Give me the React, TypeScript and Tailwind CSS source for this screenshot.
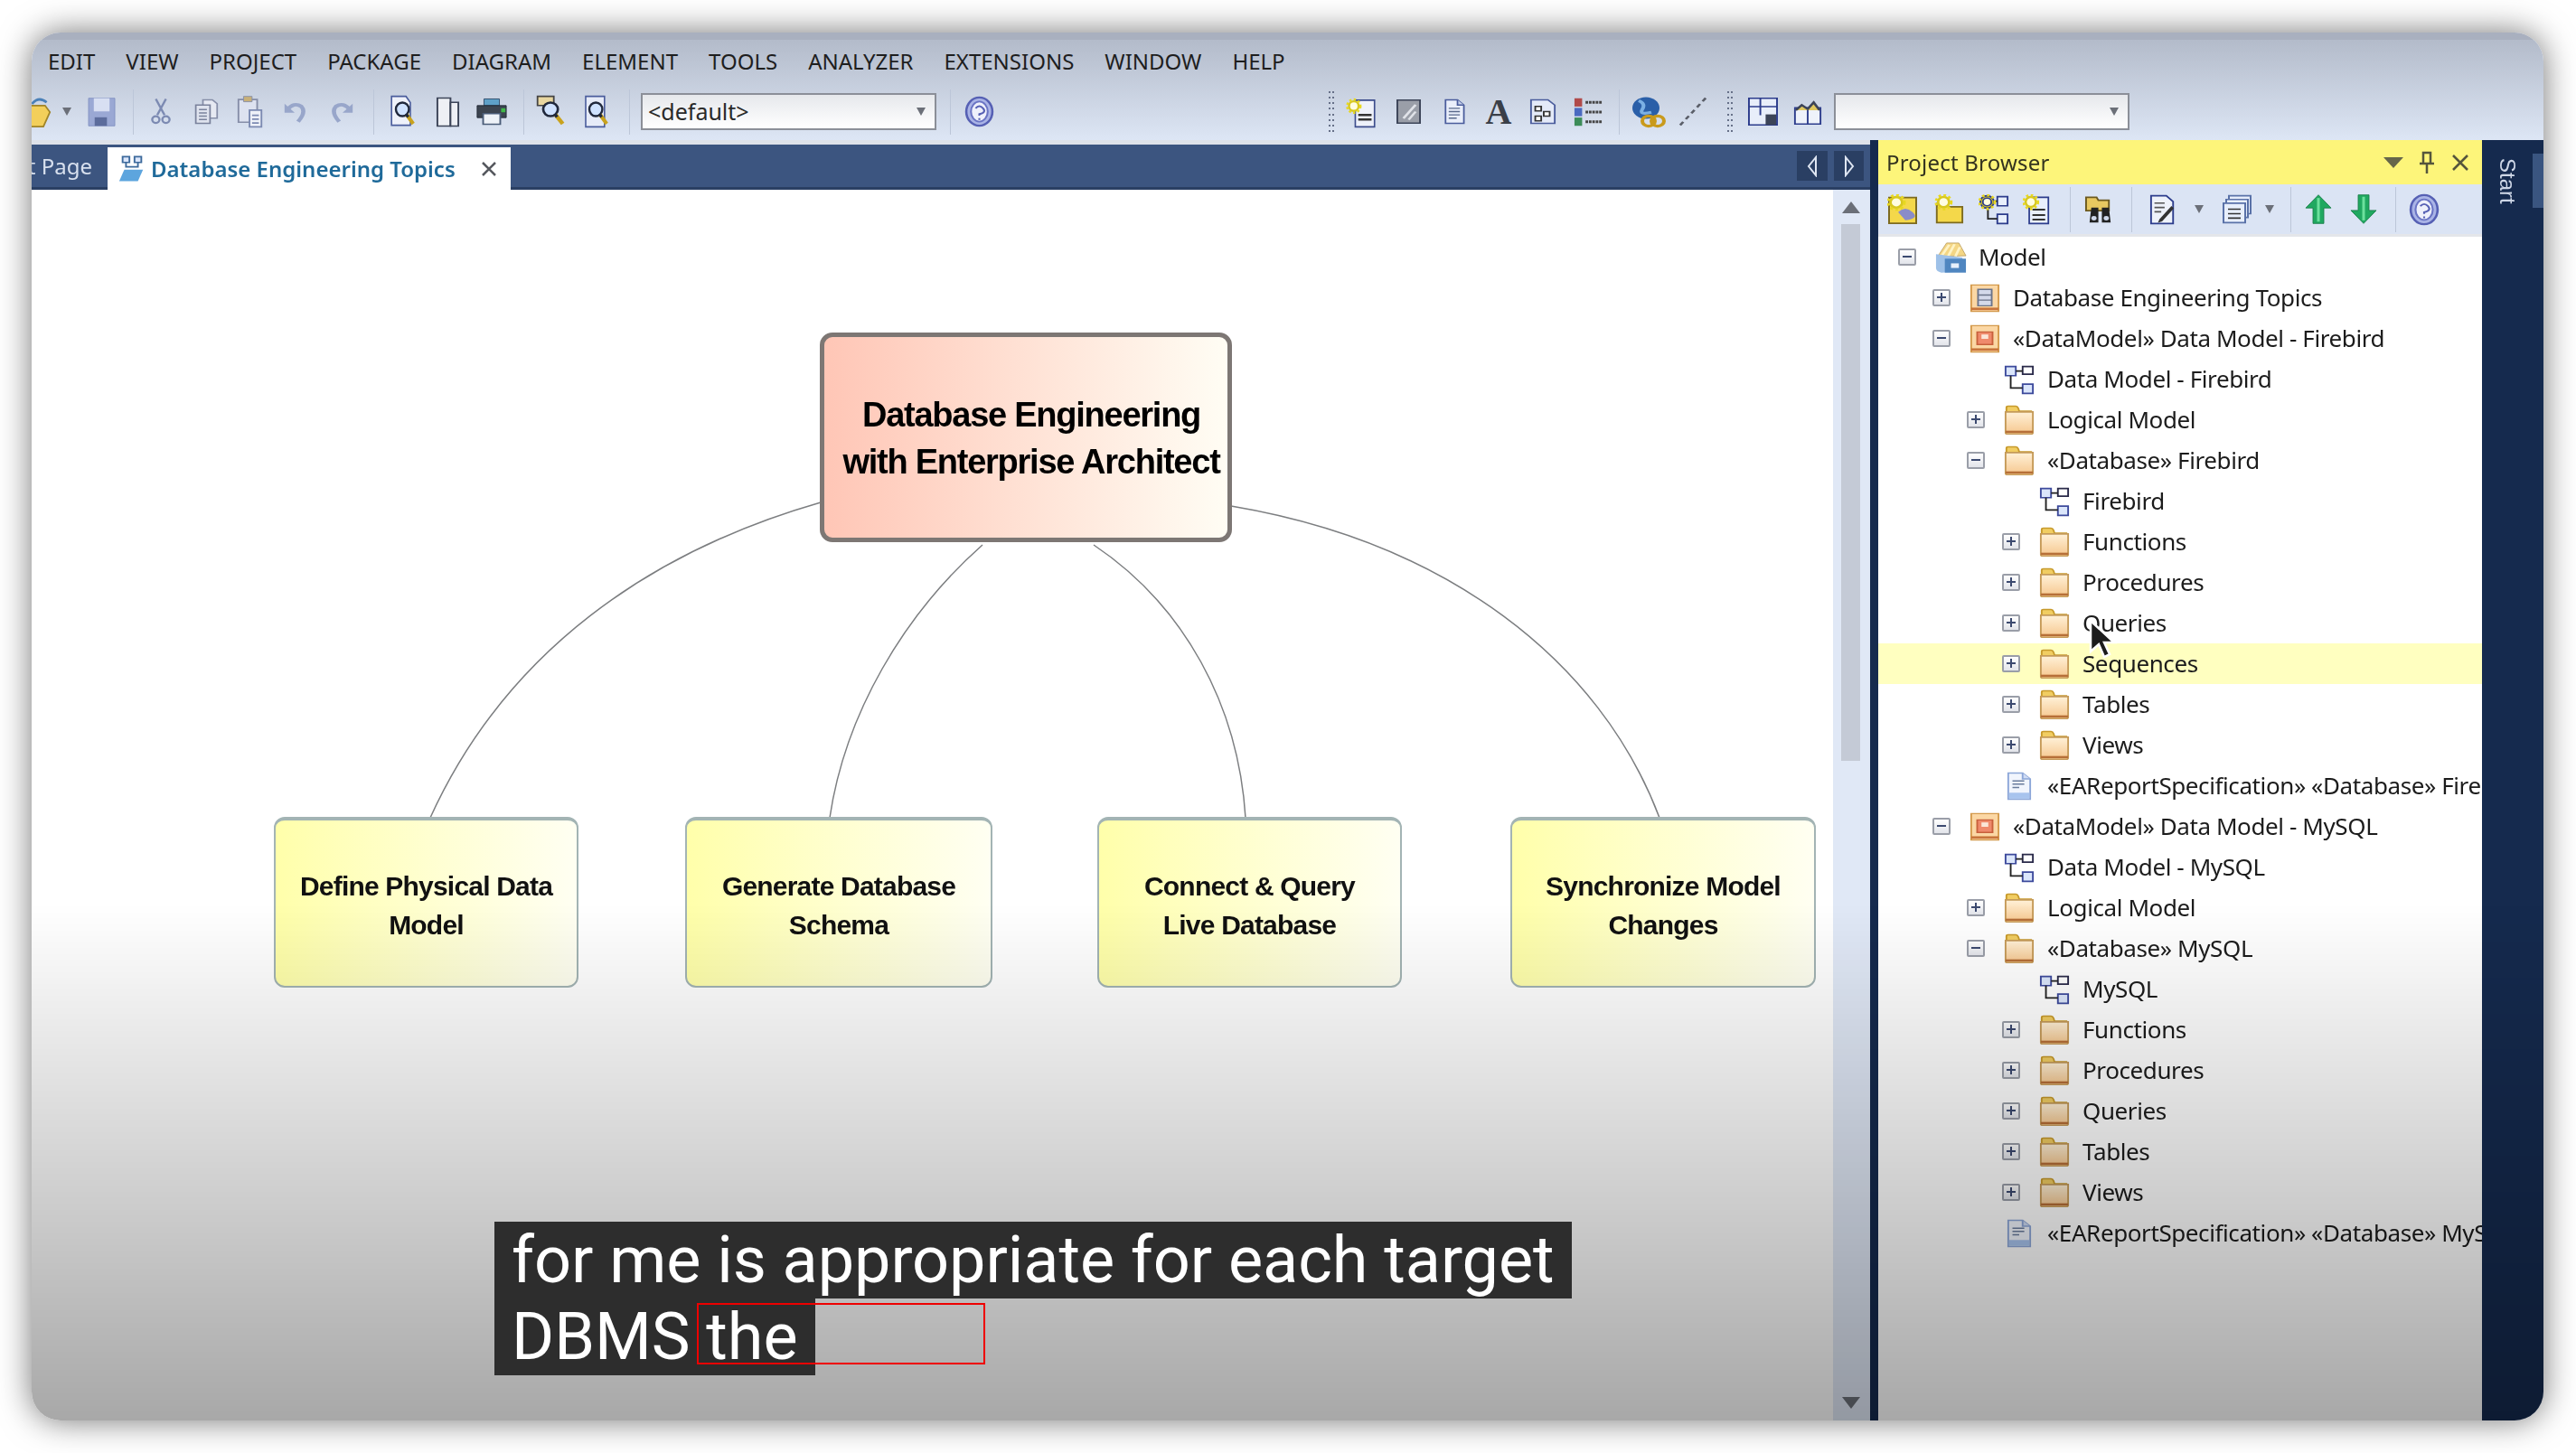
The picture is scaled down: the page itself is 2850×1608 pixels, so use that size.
import React from 'react';

const uiFont = "font-['Noto_Sans','Open_Sans',sans-serif]";

// toolbar glyphs
const Page = ({ lines = true }: { lines?: boolean }) => (
    <svg width="30" height="29" viewBox="0 0 34 40" preserveAspectRatio="none">
        <path d="M6 2h15l8 8v28H6z" fill="#e9eefa" stroke="#4a5c9c" strokeWidth="2" />
        <path d="M21 2v8h8" fill="#c4cfea" stroke="#4a5c9c" strokeWidth="2" />
        {lines && <path d="M10 15h14M10 20h14M10 25h14M10 30h10" stroke="#5a6a8c" strokeWidth="2" />}
    </svg>
);

const Magnify = ({ back, w = 32 }: { back?: React.ReactNode; w?: number }) => (
    <svg width={w} height="37" viewBox="0 0 40 44" preserveAspectRatio="none">
        {back}
        <circle cx="19" cy="19" r="9" fill="#cfe2ff" stroke="#20283c" strokeWidth="3" />
        <path d="M25 26l9 12" stroke="#c9a21c" strokeWidth="5" />
        <path d="M24 25l3 4" stroke="#20283c" strokeWidth="4" />
    </svg>
);

const Help = ({ size = 33 }: { size?: number }) => (
    <svg width={size} height={size + 2} viewBox="0 0 32 38" preserveAspectRatio="none">
        <ellipse cx="16" cy="19" rx="14" ry="17" fill="#aab4e6" stroke="#5660b4" strokeWidth="2.5" />
        <ellipse cx="16" cy="19" rx="9" ry="12" fill="#eef0fb" stroke="#6a74c4" strokeWidth="2" />
        <path d="M12 15q4-5 8 0t-4 7v2M16 27v2" fill="none" stroke="#5660b4" strokeWidth="2" />
    </svg>
);

const Cut = () => (
    <svg width="24" height="31" viewBox="0 0 30 42" preserveAspectRatio="none" fill="none" stroke="#7c8ab2" strokeWidth="3">
        <path d="M8 2l12 24M22 2L10 26" />
        <circle cx="8" cy="33" r="5" />
        <circle cx="22" cy="33" r="5" />
    </svg>
);

const Copy = () => (
    <svg width="28" height="29" viewBox="0 0 32 40" preserveAspectRatio="none">
        <path d="M12 2h12l6 6v22H12z" fill="#e6e9f2" stroke="#868ea8" strokeWidth="2" />
        <path d="M3 10h18v28H3z" fill="#dfe3ee" stroke="#7a829c" strokeWidth="2" />
        <path d="M7 17h10M7 22h10M7 27h10M7 32h10" stroke="#7a829c" strokeWidth="2" />
    </svg>
);

const Paste = () => (
    <svg width="32" height="37" viewBox="0 0 34 44" preserveAspectRatio="none">
        <path d="M3 6h22v30H3z" fill="#dde2f0" stroke="#868ea8" strokeWidth="2" />
        <path d="M9 2h10v7H9z" fill="#c8b078" stroke="#868ea8" />
        <path d="M16 20h14v22H16z" fill="#eef1f8" stroke="#7c8ab2" strokeWidth="2" />
        <path d="M19 27h8M19 32h8M19 37h8" stroke="#7c8ab2" strokeWidth="2" />
    </svg>
);

const Undo = ({ flip }: { flip?: boolean }) => (
    <svg width="28" height="26" viewBox="0 0 30 34" preserveAspectRatio="none" className={flip ? '-scale-x-100' : ''} fill="none">
        <path d="M6 14q8-12 17-5 6 8-4 22" stroke="#98a6ca" strokeWidth="5" />
        <path d="M3 5v13h12z" fill="#98a6ca" />
    </svg>
);

const Save = () => (
    <svg width="31" height="32" viewBox="0 0 32 44" preserveAspectRatio="none">
        <path d="M1 1h30v42H1z" fill="#9aa8d4" stroke="#8090c0" />
        <path d="M7 1h18v20H7z" fill="#d8dff2" />
        <path d="M8 30h14v13H8z" fill="#5c6c9c" />
    </svg>
);

const Printer = () => (
    <svg width="36" height="31" viewBox="0 0 38 42" preserveAspectRatio="none">
        <path d="M10 2h18v10H10z" fill="#5ea0c8" stroke="#244060" />
        <path d="M2 12h34v18H2z" fill="#3c4450" stroke="#1c2430" />
        <path d="M30 16h5v6h-5z" fill="#40b848" />
        <path d="M9 24h20v16H9z" fill="#eef2f8" stroke="#4a5c78" strokeWidth="2" />
    </svg>
);

const Dual = () => (
    <svg width="27" height="34" viewBox="0 0 28 44" preserveAspectRatio="none" fill="#eef0f5" stroke="#3c4458" strokeWidth="2">
        <path d="M2 2h15v40H2z" />
        <path d="M17 8h9v34h-9z" />
    </svg>
);

const Gripper = ({ className = '' }: { className?: string }) => (
    <div className={`w-[8px] h-[48px] shrink-0 flex flex-col justify-between items-center py-px ${className}`}>
        {[0, 1, 2, 3, 4, 5, 6, 7].map(i => (
            <div key={i} className="w-[6px] h-[2px] border-x-2 border-[#667088]" />
        ))}
    </div>
);

const Sep = ({ className = '' }: { className?: string }) => (
    <div className={`w-px h-[50px] shrink-0 bg-[#bcc6d8] ${className}`} />
);

const Slot = ({ children, className = 'w-[50px]' }: { children?: React.ReactNode; className?: string }) => (
    <div className={`h-[50px] shrink-0 flex items-center justify-center ${className}`}>{children}</div>
);

const Arrow = ({ className = '' }: { className?: string }) => (
    <div className={`w-0 h-0 border-x-[5px] border-t-[9px] border-x-transparent border-t-[#6b6f78] ${className}`} />
);

const DropBox = ({ text, className }: { text?: string; className: string }) => (
    <div className={`h-[41px] shrink-0 flex items-center justify-between pl-[6px] pr-[10px] bg-linear-to-b from-[#e6e8ec] to-white border-2 border-[#8b8f98] ${className}`}>
        <span className={`text-[25px] text-[#2a2a2a] ${uiFont}`}>{text}</span>
        <Arrow />
    </div>
);

const Star = ({ x, y }: { x: number; y: number }) => (
    <g transform={`translate(${x} ${y})`}>
        <circle r="8" fill="#d8c820" />
        <circle r="9" fill="none" stroke="#e8d820" strokeWidth="3" strokeDasharray="3 3" />
        <circle r="5" fill="#fffde0" />
    </g>
);

const DiagramIcon = () => (
    <svg width="34" height="34" viewBox="0 0 36 40" preserveAspectRatio="none" fill="#dbe6fb" stroke="#3d4a9c" strokeWidth="2">
        <path d="M2 3h12v12H2z" />
        <path d="M22 3h12v10H22z" fill="#fff" stroke="#2a2a4a" />
        <path d="M22 26h12v12H22z" />
        <path d="M14 9h8M8 15v16h14" fill="none" stroke="#222" />
    </svg>
);

const Folder = () => (
    <svg width="34" height="33" viewBox="0 0 36 42" preserveAspectRatio="none">
        <defs>
            <linearGradient id="folder" x1="0" y1="0" x2="0" y2="1">
                <stop offset="0" stopColor="#fff1d8" />
                <stop offset="1" stopColor="#f6c78e" />
            </linearGradient>
        </defs>
        <path d="M3 9V4q0-2 2-2h9q2 0 3 3l1 4h14v30H3z" fill="#f1cd62" stroke="#c79a2c" strokeWidth="2" />
        <path d="M2 10h32v29q0 2-2 2H4q-2 0-2-2z" fill="url(#folder)" stroke="#c59a58" strokeWidth="2" />
        <path d="M2 38h32" stroke="#b66f38" strokeWidth="3" />
    </svg>
);

const PackageIcon = ({ inner }: { inner: 'list' | 'model' }) => (
    <svg width="34" height="32" viewBox="0 0 36 46" preserveAspectRatio="none">
        <path d="M2 2h32v42H2z" fill="#fbd7a4" stroke="#d49a4c" strokeWidth="2" />
        <path d="M2 40h32" stroke="#c8753c" strokeWidth="4" />
        {inner === 'list' ? (
            <path d="M10 9h16v26H10zM10 18h16M10 26h16" fill="#d4d9ea" stroke="#6a7388" strokeWidth="2" />
        ) : (
            <g>
                <path d="M9 12h18v20H9z" fill="#ef8a6c" stroke="#c8603c" strokeWidth="2" />
                <path d="M14 16h8v7h-8z" fill="#fbe6d8" />
            </g>
        )}
    </svg>
);

const ReportIcon = () => (
    <svg width="28" height="32" viewBox="0 0 30 44" preserveAspectRatio="none">
        <path d="M2 2h17l9 9v31H2z" fill="#f1f5fd" stroke="#8ca6d8" strokeWidth="2" />
        <path d="M19 2v9h9" fill="#cfdcf4" stroke="#8ca6d8" strokeWidth="2" />
        <path d="M7 14h14M7 19h14M7 24h8" stroke="#6a7c9c" strokeWidth="2" />
        <path d="M3 32h24v9H3z" fill="#a8c4ee" />
    </svg>
);

const ModelIcon = () => (
    <svg width="37" height="36" viewBox="0 0 38 56" preserveAspectRatio="none">
        <path d="M4 26L14 3h14l8 22z" fill="#f4d684" stroke="#b89a5c" />
        <path d="M9 24l8-18M16 25l7-20M24 26l5-16" stroke="#fff3c4" strokeWidth="3" />
        <path d="M2 22l30 6v24L8 54q-6-2-6-8z" fill="#9ec1e8" />
        <path d="M12 30h24v24H12z" fill="#4f86c0" />
        <path d="M19 38h9v8h-9z" fill="#e7f0fb" />
    </svg>
);

const Expander = ({ open }: { open?: boolean }) => (
    <div className="w-[20px] h-[19px] shrink-0 rounded-[2px] border-2 border-[#9a9ea8] bg-linear-to-b from-white to-[#e2e4ea] relative">
        <div className="absolute left-[3px] top-[6px] w-[10px] h-[2px] bg-[#3c4a70]" />
        {!open && <div className="absolute left-[7px] top-[2px] w-[2px] h-[10px] bg-[#3c4a70]" />}
    </div>
);

type Row = {
    text: string;
    level: 0 | 1 | 2 | 3;
    icon: 'model' | 'list' | 'pkg' | 'diagram' | 'folder' | 'report';
    exp?: 'open' | 'closed';
    active?: boolean;
};

const rows: Row[] = [
    { text: 'Model', level: 0, icon: 'model', exp: 'open' },
    { text: 'Database Engineering Topics', level: 1, icon: 'list', exp: 'closed' },
    { text: '«DataModel» Data Model - Firebird', level: 1, icon: 'pkg', exp: 'open' },
    { text: 'Data Model - Firebird', level: 2, icon: 'diagram' },
    { text: 'Logical Model', level: 2, icon: 'folder', exp: 'closed' },
    { text: '«Database» Firebird', level: 2, icon: 'folder', exp: 'open' },
    { text: 'Firebird', level: 3, icon: 'diagram' },
    { text: 'Functions', level: 3, icon: 'folder', exp: 'closed' },
    { text: 'Procedures', level: 3, icon: 'folder', exp: 'closed' },
    { text: 'Queries', level: 3, icon: 'folder', exp: 'closed' },
    { text: 'Sequences', level: 3, icon: 'folder', exp: 'closed', active: true },
    { text: 'Tables', level: 3, icon: 'folder', exp: 'closed' },
    { text: 'Views', level: 3, icon: 'folder', exp: 'closed' },
    { text: '«EAReportSpecification» «Database» Firebird', level: 2, icon: 'report' },
    { text: '«DataModel» Data Model - MySQL', level: 1, icon: 'pkg', exp: 'open' },
    { text: 'Data Model - MySQL', level: 2, icon: 'diagram' },
    { text: 'Logical Model', level: 2, icon: 'folder', exp: 'closed' },
    { text: '«Database» MySQL', level: 2, icon: 'folder', exp: 'open' },
    { text: 'MySQL', level: 3, icon: 'diagram' },
    { text: 'Functions', level: 3, icon: 'folder', exp: 'closed' },
    { text: 'Procedures', level: 3, icon: 'folder', exp: 'closed' },
    { text: 'Queries', level: 3, icon: 'folder', exp: 'closed' },
    { text: 'Tables', level: 3, icon: 'folder', exp: 'closed' },
    { text: 'Views', level: 3, icon: 'folder', exp: 'closed' },
    { text: '«EAReportSpecification» «Database» MySQL', level: 2, icon: 'report' },
];

const indent = ['pl-[22px]', 'pl-[60px]', 'pl-[98px]', 'pl-[137px]'];

const TreeRow = ({ row }: { row: Row }) => (
    <div className={`h-[45px] flex items-center whitespace-nowrap ${indent[row.level]} ${row.active ? 'bg-[#ffffc0]' : ''}`}>
        <div className="w-[20px] shrink-0 flex items-center">{row.exp && <Expander open={row.exp === 'open'} />}</div>
        <div className="ml-[14px] w-[48px] h-[45px] shrink-0 flex items-center justify-center">
            {row.icon === 'model' && <ModelIcon />}
            {row.icon === 'list' && <PackageIcon inner="list" />}
            {row.icon === 'pkg' && <PackageIcon inner="model" />}
            {row.icon === 'diagram' && <DiagramIcon />}
            {row.icon === 'folder' && <Folder />}
            {row.icon === 'report' && <ReportIcon />}
        </div>
        <span className="ml-[7px] text-[26px] tracking-[-0.4px] text-[#1c1c1c]">{row.text}</span>
    </div>
);

const MENU = ['EDIT', 'VIEW', 'PROJECT', 'PACKAGE', 'DIAGRAM', 'ELEMENT', 'TOOLS', 'ANALYZER', 'EXTENSIONS', 'WINDOW', 'HELP'];

const childNodes = [
    { lines: ['Define Physical Data', 'Model'], className: 'left-[268px] w-[337px]' },
    { lines: ['Generate Database', 'Schema'], className: 'left-[723px] w-[340px]' },
    { lines: ['Connect & Query', 'Live Database'], className: 'left-[1179px] w-[337px]' },
    { lines: ['Synchronize Model', 'Changes'], className: 'left-[1636px] w-[338px]' },
];

const Diagram = () => (
    <div className="relative flex-1 bg-white">
        <svg className="absolute inset-0 w-full h-full" viewBox="35 210 1993 1362" fill="none" stroke="#7c7e80" strokeWidth="1.5">
            <path d="M908 556C720 610 560 720 476 905" />
            <path d="M1087 603C1000 680 935 790 918 905" />
            <path d="M1210 603C1310 670 1370 780 1378 905" />
            <path d="M1362 560C1600 600 1770 730 1836 905" />
        </svg>
        <div className="absolute left-[872px] top-[158px] w-[456px] h-[232px] rounded-[14px] border-[5px] border-[#7d7774] bg-linear-to-r from-[#ffc6b6] to-[#fffdf4] flex flex-col items-center justify-center pl-[12px] pt-[2px] font-['Liberation_Sans',sans-serif] font-bold text-[38px] leading-[52px] tracking-[-1.25px] text-black whitespace-nowrap">
            <div>Database Engineering</div>
            <div>with Enterprise Architect</div>
        </div>
        {childNodes.map(n => (
            <div key={n.lines[0]} className={`absolute top-[694px] h-[189px] rounded-[12px] border-2 border-[#a3b4b4] border-t-[4px] bg-linear-to-r from-[#ffffaa] to-[#fffff2] flex flex-col items-center justify-center pt-[4px] font-['Liberation_Sans',sans-serif] font-bold text-[30px] leading-[43px] tracking-[-0.8px] text-[#111] whitespace-nowrap ${n.className}`}>
                {n.lines.map(l => <div key={l}>{l}</div>)}
            </div>
        ))}
    </div>
);

export default function App() {
    return (
        <div className="w-[2850px] h-[1608px] bg-white pt-[36px] pl-[35px] overflow-hidden">
            <div className="relative w-[2779px] h-[1536px] rounded-[32px] overflow-hidden shadow-[0_0_36px_rgba(0,0,0,0.55)]">
                <div className={`flex flex-col h-full blur-[0.6px] ${uiFont}`}>
                    {/* Menu and toolbar */}
                    <div className="h-[119px] shrink-0 border-t-[8px] border-[#a9b0bf] bg-linear-to-b from-[#b3bbca] to-[#dde6f5]">
                        <div className="h-[48px] flex items-center gap-[34px] pl-[18px] text-[24px] text-[#1e1e1e]">
                            {MENU.map(m => <span key={m}>{m}</span>)}
                        </div>
                        <div className="h-[63px] flex items-center">
                            <Slot className="w-[22px] overflow-hidden justify-end">
                                <svg width="36" height="36" viewBox="0 0 40 40" className="shrink-0">
                                    <path d="M2 12h30l6 8-8 18H2z" fill="#f3cf5a" stroke="#a08428" strokeWidth="2" />
                                    <path d="M16 10q8-10 18-2" stroke="#4a80b8" strokeWidth="3" fill="none" />
                                </svg>
                            </Slot>
                            <Slot className="w-[34px]"><Arrow /></Slot>
                            <Slot className="w-[42px]"><Save /></Slot>
                            <Sep className="ml-[14px] mr-[5px]" />
                            <Slot><Cut /></Slot>
                            <Slot><Copy /></Slot>
                            <Slot className="w-[48px]"><Paste /></Slot>
                            <Slot><Undo /></Slot>
                            <Slot className="w-[56px]"><Undo flip /></Slot>
                            <Sep className="ml-[6px] mr-[7px]" />
                            <Slot><Magnify back={<path d="M4 2h20l6 8v30H4z" fill="#eef1fa" stroke="#4a5c9c" strokeWidth="2" />} /></Slot>
                            <Slot className="w-[48px]"><Dual /></Slot>
                            <Slot><Printer /></Slot>
                            <Sep className="ml-[10px] mr-[5px]" />
                            <Slot><Magnify w={36} back={<path d="M3 2h20v12H3z" fill="#e8d6a0" stroke="#444" strokeWidth="2" />} /></Slot>
                            <Slot><Magnify back={<path d="M5 2h26v40H5z" fill="#e6ebf8" stroke="#4a5c9c" strokeWidth="2" />} /></Slot>
                            <Sep className="ml-[11px] mr-[12px]" />
                            <DropBox text="<default>" className="w-[327px]" />
                            <Sep className="ml-[15px] mr-[6px]" />
                            <Slot><Help /></Slot>
                            <Gripper className="ml-[361px] mr-[3px]" />
                            <Slot className="w-[52px]">
                                <svg width="36" height="36" viewBox="0 0 44 44" preserveAspectRatio="none">
                                    <path d="M14 6h26v36H14z" fill="#eef1fa" stroke="#3c4c8c" strokeWidth="2" />
                                    <path d="M18 26h18M18 32h18" stroke="#333" strokeWidth="3" />
                                    <Star x={12} y={14} />
                                </svg>
                            </Slot>
                            <Slot className="w-[52px]">
                                <svg width="27" height="27" viewBox="0 0 28 36" preserveAspectRatio="none">
                                    <rect x="1" y="1" width="26" height="34" fill="#9a9ea8" stroke="#3c4458" strokeWidth="2" />
                                    <path d="M8 28L22 8M14 30l8-12" stroke="#e0e2e8" strokeWidth="3" />
                                </svg>
                            </Slot>
                            <Slot><Page /></Slot>
                            <Slot className="w-[48px]"><span className="font-['Liberation_Serif',serif] font-bold text-[40px] leading-none text-[#3a3f48]">A</span></Slot>
                            <Slot>
                                <svg width="30" height="29" viewBox="0 0 32 40" preserveAspectRatio="none">
                                    <path d="M2 2h20l8 8v28H2z" fill="#e4eaf8" stroke="#4a5c9c" strokeWidth="2" />
                                    <path d="M7 12h7v7H7zM17 20h7v7h-7zM7 27h7v7H7z" fill="#fff" stroke="#333" strokeWidth="2" />
                                </svg>
                            </Slot>
                            <Slot>
                                <svg width="32" height="32" viewBox="0 0 34 42" preserveAspectRatio="none">
                                    <rect x="1" y="1" width="9" height="12" fill="#b04a4a" />
                                    <rect x="1" y="15" width="9" height="12" fill="#4a6ac0" />
                                    <rect x="1" y="29" width="9" height="12" fill="#3c8c58" />
                                    <path d="M14 7h20M14 21h20M14 35h20" stroke="#444" strokeWidth="4" strokeDasharray="3 1" />
                                </svg>
                            </Slot>
                            <Sep className="ml-[9px] mr-[7px]" />
                            <Slot>
                                <svg width="38" height="37" viewBox="0 0 38 46" preserveAspectRatio="none">
                                    <circle cx="16" cy="18" r="15" fill="#2a5fa8" />
                                    <path d="M8 8q8 4 4 12t10 4" stroke="#7bb0e4" strokeWidth="4" fill="none" />
                                    <circle cx="19" cy="36" r="7" fill="none" stroke="#c99a1c" strokeWidth="4" />
                                    <circle cx="29" cy="36" r="7" fill="none" stroke="#c99a1c" strokeWidth="4" />
                                </svg>
                            </Slot>
                            <Slot className="w-[48px]">
                                <svg width="32" height="33" viewBox="0 0 34 44" preserveAspectRatio="none">
                                    <path d="M2 42L32 2" stroke="#5a5e68" strokeWidth="3" strokeDasharray="6 5" />
                                </svg>
                            </Slot>
                            <Gripper className="ml-[13px] mr-[7px]" />
                            <Slot>
                                <svg width="33" height="31" viewBox="0 0 34 40" preserveAspectRatio="none">
                                    <path d="M1 1h32v38H1z" fill="#e8eefa" stroke="#2c3c8c" strokeWidth="2" />
                                    <path d="M1 13h32M14 1v24" stroke="#2c3c8c" strokeWidth="2" />
                                    <path d="M20 24h12v15H20z" fill="#3c4458" />
                                </svg>
                            </Slot>
                            <Slot>
                                <svg width="32" height="29" viewBox="0 0 34 40" preserveAspectRatio="none">
                                    <path d="M2 14h30v25H2z" fill="#eef2fa" stroke="#2c3c8c" strokeWidth="2" />
                                    <path d="M17 14v25" stroke="#2c3c8c" strokeWidth="2" />
                                    <path d="M3 18l7-8 7 6 7-10 7 12" fill="#e0c860" stroke="#3c4458" strokeWidth="3" />
                                </svg>
                            </Slot>
                            <DropBox className="w-[327px] ml-[4px]" />
                        </div>
                    </div>

                    <div className="flex-1 flex min-h-0">
                        {/* Diagram side */}
                        <div className="w-[2034px] shrink-0 flex flex-col">
                            <div className="h-[5px] bg-[#dee2e9]" />
                            <div className="h-[50px] shrink-0 flex items-end bg-[#3c5580] border-b-[3px] border-[#2a3f63]">
                                <div className="w-[84px] h-full flex items-center justify-end overflow-hidden pr-[17px] text-[24px] text-[#d8e0ee] whitespace-nowrap">t Page</div>
                                <div className="w-[446px] h-[47px] -mb-[3px] bg-white flex items-center pl-[11px]">
                                    <svg width="32" height="32" viewBox="0 0 34 40" preserveAspectRatio="none">
                                        <path d="M6 3h8v8H6zM20 3h8v8h-8z" fill="#dbe6fb" stroke="#3d6a9c" strokeWidth="2" />
                                        <path d="M10 11v6h14v-6" fill="none" stroke="#3d6a9c" strokeWidth="2" />
                                        <path d="M8 21h22l-6 16H2z" fill="#5da5de" />
                                    </svg>
                                    <span className="ml-[5px] text-[24px] font-semibold tracking-[0px] text-[#1f6a9a] whitespace-nowrap">Database Engineering Topics</span>
                                    <svg width="18" height="18" viewBox="0 0 18 18" className="ml-auto mr-[15px]" stroke="#55585e" strokeWidth="2.5">
                                        <path d="M2 2l14 14M16 2L2 16" />
                                    </svg>
                                </div>
                                <div className="ml-auto h-full flex items-center gap-[7px] pr-[7px]">
                                    <div className="w-[34px] h-[33px] bg-[#2a3f63] flex items-center justify-center">
                                        <svg width="12" height="24" viewBox="0 0 12 24" fill="none" stroke="#dfe6f2" strokeWidth="2"><path d="M10 2L2 12l8 10z" /></svg>
                                    </div>
                                    <div className="w-[33px] h-[33px] bg-[#2a3f63] flex items-center justify-center">
                                        <svg width="12" height="24" viewBox="0 0 12 24" fill="none" stroke="#dfe6f2" strokeWidth="2"><path d="M2 2l8 10L2 22z" /></svg>
                                    </div>
                                </div>
                            </div>
                            <div className="flex-1 flex min-h-0">
                                <Diagram />
                                <div className="w-[41px] shrink-0 bg-[#e0e8f6] flex flex-col items-center pt-[13px] pb-[13px] pr-[2px]">
                                    <div className="w-0 h-0 border-x-[10px] border-b-[13px] border-x-transparent border-b-[#6b6f78]" />
                                    <div className="w-[21px] h-[594px] mt-[12px] bg-[#c4cad6]" />
                                    <div className="w-0 h-0 border-x-[10px] border-t-[13px] border-x-transparent border-t-[#6b6f78] mt-auto" />
                                </div>
                            </div>
                        </div>

                        {/* Project browser */}
                        <div className="w-[9px] shrink-0 bg-[#152a4e]" />
                        <div className="w-[668px] shrink-0 flex flex-col">
                            <div className="h-[49px] shrink-0 bg-[#fdf57a] flex items-center pl-[9px] pr-[14px] text-[24px] tracking-[0.2px] text-[#33331f]">
                                <span>Project Browser</span>
                                <div className="ml-auto w-0 h-0 border-x-[11px] border-t-[12px] border-x-transparent border-t-[#66664a]" />
                                <svg width="18" height="26" viewBox="0 0 18 26" className="ml-[17px]" fill="none" stroke="#55553c" strokeWidth="2.5">
                                    <path d="M5 2h8v12H5zM1 14h16M9 14v11" />
                                </svg>
                                <svg width="20" height="20" viewBox="0 0 20 20" className="ml-[18px]" stroke="#55553c" strokeWidth="2.5">
                                    <path d="M2 2l16 16M18 2L2 18" />
                                </svg>
                            </div>
                            <div className="h-[58px] shrink-0 bg-[#dbe4f4] border-b-[3px] border-[#e4e6ea] flex items-center pl-[3px]">
                                <Slot>
                                    <svg width="36" height="34" viewBox="0 0 36 38" preserveAspectRatio="none">
                                        <path d="M2 4h30v32H2z" fill="#f4d84a" stroke="#7c6a20" strokeWidth="2" />
                                        <path d="M12 22q8-8 16 0t-8 10z" fill="#8a8cc8" />
                                        <Star x={10} y={10} />
                                    </svg>
                                </Slot>
                                <Slot>
                                    <svg width="34" height="33" viewBox="0 0 36 38" preserveAspectRatio="none">
                                        <path d="M4 12h12l2 4h16v20H4z" fill="#f4d84a" stroke="#7c6a20" strokeWidth="2" />
                                        <Star x={12} y={10} />
                                    </svg>
                                </Slot>
                                <Slot>
                                    <svg width="34" height="34" viewBox="0 0 36 40" preserveAspectRatio="none" fill="#e8effc" stroke="#2c3c8c" strokeWidth="2">
                                        <path d="M22 3h12v12H22zM22 26h12v12H22z" />
                                        <path d="M11 15v17h11M16 9h6" fill="none" stroke="#222" />
                                        <Star x={10} y={10} />
                                    </svg>
                                </Slot>
                                <Slot className="w-[44px]">
                                    <svg width="30" height="34" viewBox="0 0 34 40" preserveAspectRatio="none">
                                        <path d="M8 4h24v34H8z" fill="#e8effc" stroke="#2c3c8c" strokeWidth="2" />
                                        <path d="M12 20h16M12 27h16M12 33h16" stroke="#333" strokeWidth="2.5" />
                                        <Star x={10} y={10} />
                                    </svg>
                                </Slot>
                                <Sep className="ml-[15px] mr-[8px]" />
                                <Slot className="w-[48px]">
                                    <svg width="35" height="33" viewBox="0 0 36 40" preserveAspectRatio="none">
                                        <path d="M2 4h12l2 4h12v14H2z" fill="#e8c860" stroke="#6c5a20" strokeWidth="2" />
                                        <path d="M8 18h8v20H6zM20 18h8l2 20H20z" fill="#222" />
                                        <circle cx="11" cy="32" r="3" fill="#cfd8ea" />
                                        <circle cx="25" cy="32" r="3" fill="#cfd8ea" />
                                    </svg>
                                </Slot>
                                <Sep className="ml-[11px] mr-[12px]" />
                                <Slot className="w-[44px]">
                                    <svg width="30" height="34" viewBox="0 0 32 42" preserveAspectRatio="none">
                                        <path d="M2 2h18l8 8v30H2z" fill="#eef2fa" stroke="#2c3c8c" strokeWidth="2" />
                                        <path d="M6 12h12M6 18h12M6 24h8" stroke="#555" strokeWidth="2" />
                                        <path d="M26 16L12 34l-2 5 5-2 14-18z" fill="#333" />
                                    </svg>
                                </Slot>
                                <Slot className="w-[36px]"><Arrow /></Slot>
                                <Slot className="w-[48px]">
                                    <svg width="34" height="33" viewBox="0 0 34 40" preserveAspectRatio="none" fill="#e8effc" stroke="#5a72a8" strokeWidth="2">
                                        <path d="M8 2h24v24H8z" />
                                        <path d="M5 7h24v24H5z" />
                                        <path d="M2 12h24v26H2z" />
                                        <path d="M7 20h14M7 26h14M7 32h14" stroke="#333" />
                                    </svg>
                                </Slot>
                                <Slot className="w-[24px]"><Arrow /></Slot>
                                <Sep className="ml-[11px] mr-[5px]" />
                                <Slot className="w-[50px]">
                                    <svg width="30" height="33" viewBox="0 0 30 48" preserveAspectRatio="none">
                                        <path d="M15 1l14 21h-8v25H9V22H1z" fill="#20a860" stroke="#1a7c48" />
                                        <path d="M15 6v38" stroke="#6ce09c" strokeWidth="3" />
                                    </svg>
                                </Slot>
                                <Slot className="w-[50px]">
                                    <svg width="30" height="33" viewBox="0 0 30 48" preserveAspectRatio="none">
                                        <path d="M9 1h12v25h8L15 47 1 26h8z" fill="#20a860" stroke="#1a7c48" />
                                        <path d="M15 4v38" stroke="#6ce09c" strokeWidth="3" />
                                    </svg>
                                </Slot>
                                <Sep className="ml-[10px] mr-[6px]" />
                                <Slot><Help size={34} /></Slot>
                            </div>
                            <div className="flex-1 bg-white overflow-hidden relative">
                                {rows.map((r, i) => <TreeRow key={i} row={r} />)}
                                {/* mouse pointer */}
                                <svg width="32" height="46" viewBox="0 0 32 46" className="absolute left-[232px] top-[423px]">
                                    <path d="M3 2v34l9-8 6 14 6-3-6-13h11z" fill="#1c1c1c" stroke="#fff" strokeWidth="2.5" />
                                </svg>
                            </div>
                        </div>
                        <div className="flex-1 bg-[#152a4e] relative">
                            <div className="absolute left-[16px] top-[20px] [writing-mode:vertical-rl] font-['Liberation_Sans',sans-serif] text-[24px] leading-none text-[#cdd6e6]">Start</div>
                            <div className="absolute right-0 top-[15px] w-[12px] h-[60px] bg-[#3a5580]" />
                        </div>
                    </div>
                </div>

                {/* player fade over the bottom of the video */}
                <div className="absolute left-0 right-0 bottom-0 h-[572px] bg-linear-to-b from-transparent to-[rgba(0,0,0,0.34)] pointer-events-none" />

                {/* captions */}
                <div className="absolute left-[512px] top-[1316px] flex flex-col items-start font-['Roboto',sans-serif] text-[72px] leading-[85px] tracking-[-0.05px] text-white whitespace-nowrap">
                    <div className="bg-[#2d2d2d] px-[19px] h-[85px]">for me is appropriate for each target</div>
                    <div className="bg-[#2d2d2d] px-[19px] h-[85px]">DBMS the</div>
                </div>
                <div className="absolute left-[736px] top-[1406px] w-[319px] h-[68px] border-2 border-[#ee0000]" />
            </div>
        </div>
    );
}
